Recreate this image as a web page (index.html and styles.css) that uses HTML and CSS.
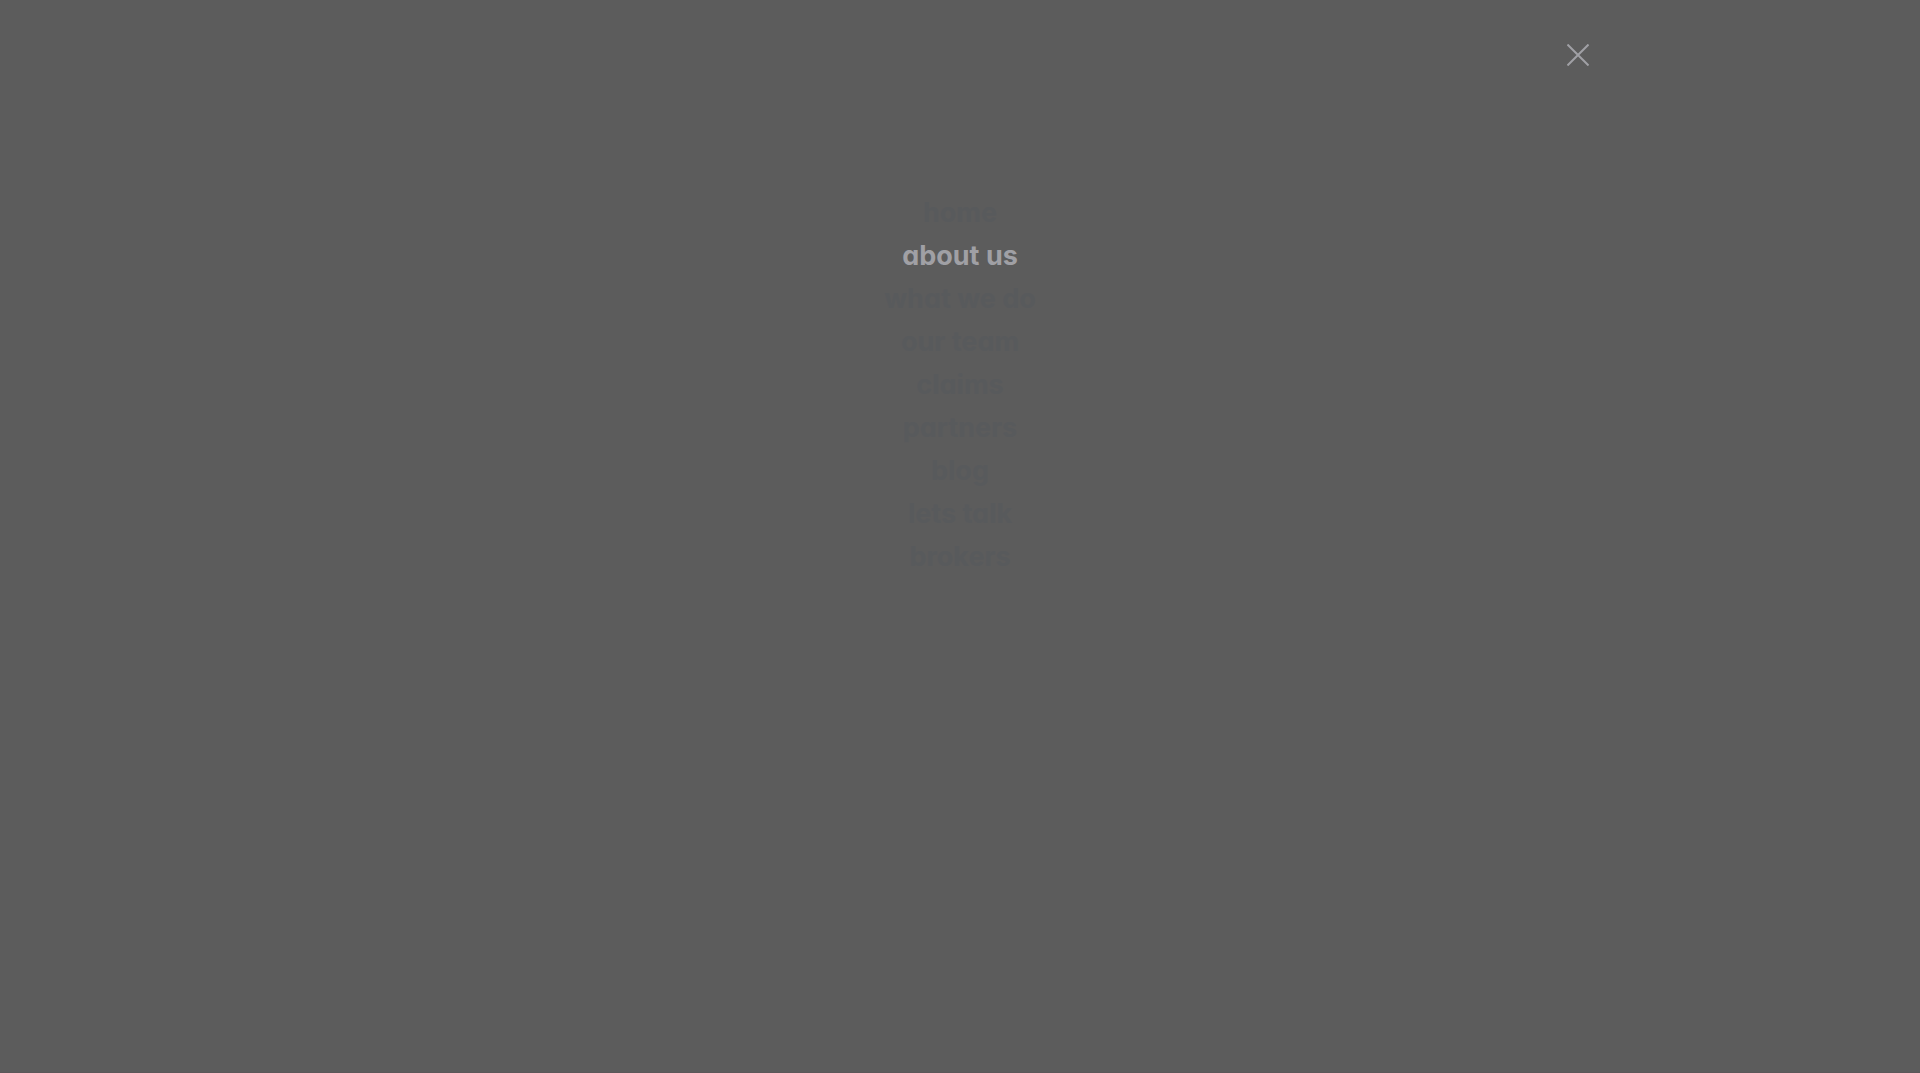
FILE: index.html
```html
<!DOCTYPE html>
<html lang="en">
<head>
<meta charset="utf-8">
<meta name="viewport" content="width=device-width, initial-scale=1">
<title>Menu</title>
<link rel="stylesheet" href="styles.css">
</head>
<body>
<div class="overlay">
  <header class="bar">
    <button class="close" type="button" aria-label="Close menu">
      <svg class="close-icon" viewBox="0 0 22 22" aria-hidden="true"><path d="M.5.5l21 21M21.5.5l-21 21"/></svg>
    </button>
  </header>
  <nav class="menu" aria-label="Main">
    <a class="menu-link" href="#">home</a>
    <a class="menu-link menu-link-active" href="#">about us</a>
    <a class="menu-link" href="#">what we do</a>
    <a class="menu-link" href="#">our team</a>
    <a class="menu-link" href="#">claims</a>
    <a class="menu-link" href="#">partners</a>
    <a class="menu-link" href="#">blog</a>
    <a class="menu-link" href="#">lets talk</a>
    <a class="menu-link" href="#">brokers</a>
  </nav>
</div>
</body>
</html>
```
FILE: styles.css
```css
* {
  box-sizing: border-box;
}

body {
  margin: 0;
  background: #5c5c5c;
  font-family: Inter, "Open Sans", sans-serif;
}

.overlay {
  min-height: 100vh;
  border-bottom: 1px solid #5c5759;
}

.bar {
  display: flex;
  justify-content: flex-end;
  max-width: 1258px;
  margin: 0 auto;
  padding-top: 44px;
}

.close {
  padding: 0;
  border: 0;
  background: none;
  color: #a0a0a5;
  cursor: pointer;
}

.close-icon {
  display: block;
  width: 22px;
  height: 22px;
  fill: none;
  stroke: currentColor;
  stroke-width: 2;
}

.menu {
  display: flex;
  flex-direction: column;
  align-items: center;
  padding-top: 125px;
}

.menu-link {
  color: #585a5c;
  font-size: 27px;
  font-weight: 700;
  line-height: 43px;
  font-feature-settings: "cv11";
  text-decoration: none;
}

.menu-link-active {
  color: #a0a0a5;
}
```
